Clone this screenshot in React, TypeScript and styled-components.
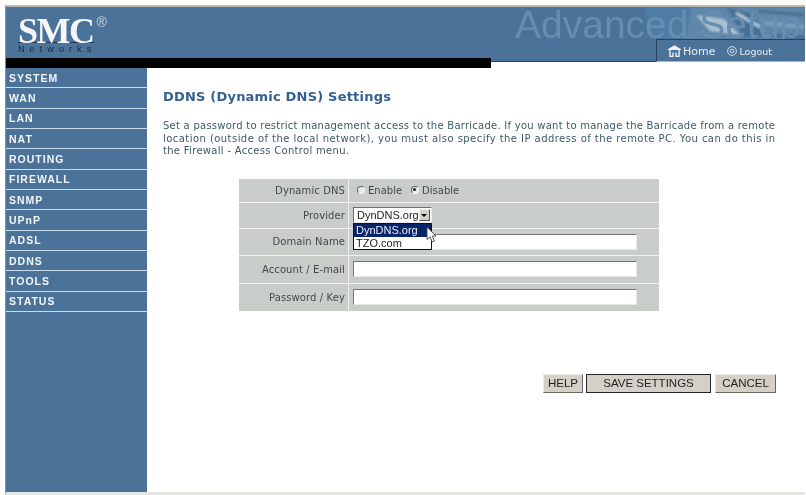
import { createGlobalStyle, styled } from "styled-components";

const Global = createGlobalStyle`
  html, body { margin: 0; padding: 0; background: #fff; }
  body { font-family: "DejaVu Sans", Verdana, sans-serif; }
`;

const Page = styled.div`
  width: 806px;
  height: 495px;
  box-sizing: border-box;
  overflow: hidden;
  display: flex;
  flex-direction: column;
  background: #fff;
  border-top: 5px solid #fdfcf8;
  filter: blur(0.3px);
`;

const Frame = styled.div`
  flex: 1;
  min-height: 0;
  display: flex;
  flex-direction: column;
  margin-left: 5px;
  margin-right: 1px;
  border-top: 2px solid #b9b9b4;
  border-left: 1px solid #8d8f90;
  border-bottom: 3px solid #e4e4e0;
`;

const Header = styled.div`
  position: relative;
  height: 54px;
  flex-shrink: 0;
  background: #4b7298;
  display: flex;
  align-items: flex-end;
  justify-content: flex-end;
  border-bottom: 1px solid #27415e;
`;

const Logo = styled.div`
  position: absolute;
  left: 12px;
  top: 2px;
  width: 76px;
`;

const LogoMark = styled.div`
  box-sizing: border-box;
  height: 34px;
  padding-top: 10px;
  font-family: "Liberation Serif", serif;
  font-weight: 700;
  font-size: 36px;
  line-height: 24px;
  letter-spacing: -1.5px;
  color: #f4f6f8;
  border-bottom: 1px solid #1e3550;
  white-space: nowrap;
  sup {
    position: relative;
    top: -16px;
    vertical-align: baseline;
    font-family: "Liberation Sans", sans-serif;
    font-weight: 400;
    font-size: 14px;
    line-height: 12px;
    letter-spacing: 0;
    color: #cfdbe6;
    margin-left: 3px;
  }
`;

const LogoSub = styled.div`
  padding-top: 1px;
  font-family: "Liberation Sans", sans-serif;
  font-size: 9px;
  line-height: 11px;
  letter-spacing: 5.1px;
  color: #17293d;
  white-space: nowrap;
`;

const Watermark = styled.div`
  position: absolute;
  left: 509px;
  top: -1px;
  font-family: "Liberation Sans", sans-serif;
  font-size: 39px;
  line-height: 37px;
  color: #678db0;
  white-space: nowrap;
`;

const Texture = styled.svg`
  position: absolute;
  left: 630px;
  top: 0;
  width: 169px;
  height: 32px;
`;

const NavTab = styled.div`
  position: relative;
  width: 149px;
  height: 23px;
  margin-bottom: -1px;
  box-sizing: border-box;
  background: #4b7298;
  border-top: 1px solid #27415e;
  border-left: 1px solid #27415e;
  border-bottom: 1px solid #9fb8cf;
  display: flex;
  align-items: center;
  padding: 1px 0 0 11px;
  color: #e9eef3;
  font-family: "DejaVu Sans", sans-serif;
`;

const NavLink = styled.span<{ $size: number; $gap: number }>`
  display: inline-flex;
  align-items: center;
  gap: 2px;
  font-size: ${(p) => p.$size}px;
  margin-right: ${(p) => p.$gap}px;
  white-space: nowrap;
`;

const BlackBar = styled.div`
  height: 10px;
  width: 485px;
  margin-top: -4px;
  position: relative;
  flex-shrink: 0;
  background: #000;
`;

const Body = styled.div`
  flex: 1;
  min-height: 0;
  display: flex;
`;

const Sidebar = styled.nav`
  width: 141px;
  flex-shrink: 0;
  background: #4b7298;
`;

const SideItem = styled.div`
  height: 20.33px;
  box-sizing: border-box;
  padding: 0 0 0 3px;
  display: flex;
  align-items: center;
  border-bottom: 1px solid #c8dcee;
  font-family: "Liberation Sans", sans-serif;
  font-size: 10.5px;
  font-weight: 700;
  letter-spacing: 1px;
  color: #f2f5f8;
`;

const Main = styled.main`
  flex: 1;
  min-width: 0;
  padding: 21px 0 0 16px;
`;

const Title = styled.h1`
  margin: 0;
  font-size: 13px;
  line-height: 16px;
  letter-spacing: 0.2px;
  font-weight: 700;
  color: #35608f;
`;

const Intro = styled.p`
  margin: 15px 0 0;
  font-size: 10px;
  line-height: 12.5px;
  color: #3d5a66;
`;

const IntroLine = styled.span<{ $spacing: number }>`
  display: block;
  white-space: nowrap;
  letter-spacing: ${(p) => p.$spacing}px;
`;

const FormTable = styled.div`
  margin: 21px 0 0 76px;
  width: 420px;
  display: grid;
  grid-template-columns: 110px 310px;
  background: #c9cdc9;
`;

const Label = styled.div<{ $h: number }>`
  height: ${(p) => p.$h}px;
  box-sizing: border-box;
  display: flex;
  align-items: center;
  justify-content: flex-end;
  padding-right: 3px;
  border-right: 1px solid #f2f3f1;
  border-bottom: 1px solid #f2f3f1;
  font-size: 10px;
  letter-spacing: 0.1px;
  color: #404a4e;
  &:nth-last-child(2) { border-bottom: 0; }
`;

const Field = styled.div<{ $h: number }>`
  height: ${(p) => p.$h}px;
  box-sizing: border-box;
  display: flex;
  align-items: center;
  padding-left: 4px;
  border-bottom: 1px solid #f2f3f1;
  font-size: 10px;
  color: #404a4e;
  &:last-child { border-bottom: 0; }
`;

const RadioGroup = styled.label`
  display: inline-flex;
  align-items: center;
  gap: 3px;
  margin-right: 9px;
  &:first-child { margin-left: 4px; }
`;

const Radio = styled.span<{ $on?: boolean }>`
  position: relative;
  width: 8px;
  height: 8px;
  border-radius: 50%;
  box-sizing: border-box;
  background: #e8e8e4;
  border: 1px solid;
  border-color: #666 #f4f4f4 #f4f4f4 #666;
  &::after {
    content: "";
    display: ${(p) => (p.$on ? "block" : "none")};
    position: absolute;
    left: 1px;
    top: 1px;
    width: 3px;
    height: 3px;
    border-radius: 50%;
    background: #222;
  }
`;

const TextBox = styled.div`
  width: 284px;
  height: 16px;
  box-sizing: border-box;
  background: #fff;
  border: 1px solid;
  border-color: #74766f #e8e8e4 #e8e8e4 #74766f;
`;

const SelectWrap = styled.div`
  position: relative;
  width: 79px;
`;

const SelectBox = styled.div`
  width: 79px;
  height: 16px;
  box-sizing: border-box;
  background: #fff;
  border: 1px solid;
  border-color: #6f716b #ebebe7 #ebebe7 #6f716b;
  display: flex;
  align-items: center;
  justify-content: space-between;
  font-family: "Liberation Sans", sans-serif;
  font-size: 11px;
  color: #1c1c1c;
  padding-left: 3px;
`;

const SelectArrow = styled.span`
  width: 12px;
  height: 12px;
  margin-right: 1px;
  background: #d4d0c8;
  border: 1px solid;
  border-color: #f4f4f0 #55554f #55554f #f4f4f0;
  box-sizing: border-box;
  display: flex;
  align-items: center;
  justify-content: center;
  &::after {
    content: "";
    border-left: 3px solid transparent;
    border-right: 3px solid transparent;
    border-top: 3px solid #000;
  }
`;

const DropList = styled.div`
  position: absolute;
  z-index: 3;
  left: 0;
  top: 16px;
  width: 79px;
  box-sizing: border-box;
  border: 1px solid #111;
  background: #fff;
  font-family: "Liberation Sans", sans-serif;
  font-size: 11px;
  line-height: 12.5px;
`;

const DropItem = styled.div<{ $active?: boolean }>`
  height: 12.5px;
  padding-left: 2px;
  background: ${(p) => (p.$active ? "#0a246a" : "#fff")};
  color: ${(p) => (p.$active ? "#e6ebf5" : "#1c1c1c")};
`;

const Cursor = styled.svg`
  position: absolute;
  z-index: 4;
  left: 73px;
  top: 19px;
  width: 12px;
  height: 18px;
`;

const Actions = styled.div`
  margin: 63px 0 0 380px;
  display: flex;
  align-items: flex-start;
  gap: 3px;
`;

const Btn = styled.button<{ $w: number; $primary?: boolean; $offset?: number }>`
  width: ${(p) => p.$w}px;
  height: 19px;
  padding: 0;
  margin-left: ${(p) => p.$offset ?? 0}px;
  box-sizing: border-box;
  background: #d4d0c8;
  font-family: "Liberation Sans", sans-serif;
  font-size: 11.5px;
  color: #222;
  border: 1px solid;
  border-color: ${(p) => (p.$primary ? "#22262b" : "#ecebe6 #66665f #66665f #ecebe6")};
`;

const menu = ["SYSTEM", "WAN", "LAN", "NAT", "ROUTING", "FIREWALL", "SNMP", "UPnP", "ADSL", "DDNS", "TOOLS", "STATUS"];

function HomeIcon() {
  return (
    <svg width="13" height="12" viewBox="0 0 13 12" fill="none" stroke="#eef2f6" strokeWidth="1.1">
      <path d="M0.5 4.5 L6.5 0.8 L12.5 4.5 Z" fill="#eef2f6" />
      <path d="M2 5 V11.5 H5 V7.5 M8 7.5 V11.5 H11 V5" strokeWidth="1.4" />
    </svg>
  );
}

function LogoutIcon() {
  return (
    <svg width="10" height="10" viewBox="0 0 10 10" fill="none" stroke="#dfe7ee" strokeWidth="0.9">
      <circle cx="5" cy="5" r="4.4" />
      <circle cx="5" cy="5" r="1.9" />
    </svg>
  );
}

export default function App() {
  return (
    <Page>
      <Global />
      <Frame>
        <Header>
          <Logo>
            <LogoMark>
              SMC<sup>®</sup>
            </LogoMark>
            <LogoSub>Networks</LogoSub>
          </Logo>
          <Texture viewBox="0 0 169 32" fill="none" preserveAspectRatio="none">
            <defs>
              <filter id="soft">
                <feGaussianBlur stdDeviation="1.2" />
              </filter>
            </defs>
            <g filter="url(#soft)">
              <path d="M8 0 H55 L60 32 H12 Z" fill="#4f7ca4" />
              <path d="M55 0 H169 V32 H50 Z" fill="#5f87a9" />
              <path d="M60 8 L88 12 L104 28 L74 24 Z" fill="#a7bfd1" />
              <path d="M90 0 L118 8 L128 30 L108 30 Z" fill="#466f95" />
              <path d="M100 6 L124 20" stroke="#b4cad9" strokeWidth="3" />
              <path d="M122 4 L168 8" stroke="#44698c" strokeWidth="2.5" />
              <path d="M128 16 L168 20" stroke="#7d9eb8" strokeWidth="4" />
              <path d="M135 28 L168 30" stroke="#416b90" strokeWidth="3" />
            </g>
          </Texture>
          <Watermark>Advanced Setup</Watermark>
          <NavTab>
            <NavLink $size={11} $gap={12}>
              <HomeIcon />
              Home
            </NavLink>
            <NavLink $size={9.5} $gap={0}>
              <LogoutIcon />
              Logout
            </NavLink>
          </NavTab>
        </Header>
        <BlackBar />
        <Body>
          <Sidebar>
            {menu.map((m) => (
              <SideItem key={m}>{m}</SideItem>
            ))}
          </Sidebar>
          <Main>
            <Title>DDNS (Dynamic DNS) Settings</Title>
            <Intro>
              <IntroLine $spacing={0.25}>
                Set a password to restrict management access to the Barricade. If you want to manage the Barricade from a
                remote
              </IntroLine>
              <IntroLine $spacing={0.45}>
                location (outside of the local network), you must also specify the IP address of the remote PC. You can do
                this in
              </IntroLine>
              <IntroLine $spacing={0.3}>the Firewall - Access Control menu.</IntroLine>
            </Intro>
            <FormTable>
              <Label $h={24}>Dynamic DNS</Label>
              <Field $h={24}>
                <RadioGroup>
                  <Radio />
                  Enable
                </RadioGroup>
                <RadioGroup>
                  <Radio $on />
                  Disable
                </RadioGroup>
              </Field>
              <Label $h={26}>Provider</Label>
              <Field $h={26}>
                <SelectWrap>
                  <SelectBox>
                    DynDNS.org
                    <SelectArrow />
                  </SelectBox>
                  <DropList>
                    <DropItem $active>DynDNS.org</DropItem>
                    <DropItem>TZO.com</DropItem>
                  </DropList>
                  <Cursor viewBox="0 0 12 18">
                    <path
                      d="M1 1 V13.5 L4 10.8 L6.2 16 L8.4 15 L6.2 10 H10 Z"
                      fill="#fff"
                      stroke="#444"
                      strokeWidth="0.9"
                    />
                  </Cursor>
                </SelectWrap>
              </Field>
              <Label $h={27}>Domain Name</Label>
              <Field $h={27}>
                <TextBox />
              </Field>
              <Label $h={28}>Account / E-mail</Label>
              <Field $h={28}>
                <TextBox />
              </Field>
              <Label $h={27}>Password / Key</Label>
              <Field $h={27}>
                <TextBox />
              </Field>
            </FormTable>
            <Actions>
              <Btn $w={40}>HELP</Btn>
              <Btn $w={125} $primary>
                SAVE SETTINGS
              </Btn>
              <Btn $w={61} $offset={1}>
                CANCEL
              </Btn>
            </Actions>
          </Main>
        </Body>
      </Frame>
    </Page>
  );
}
